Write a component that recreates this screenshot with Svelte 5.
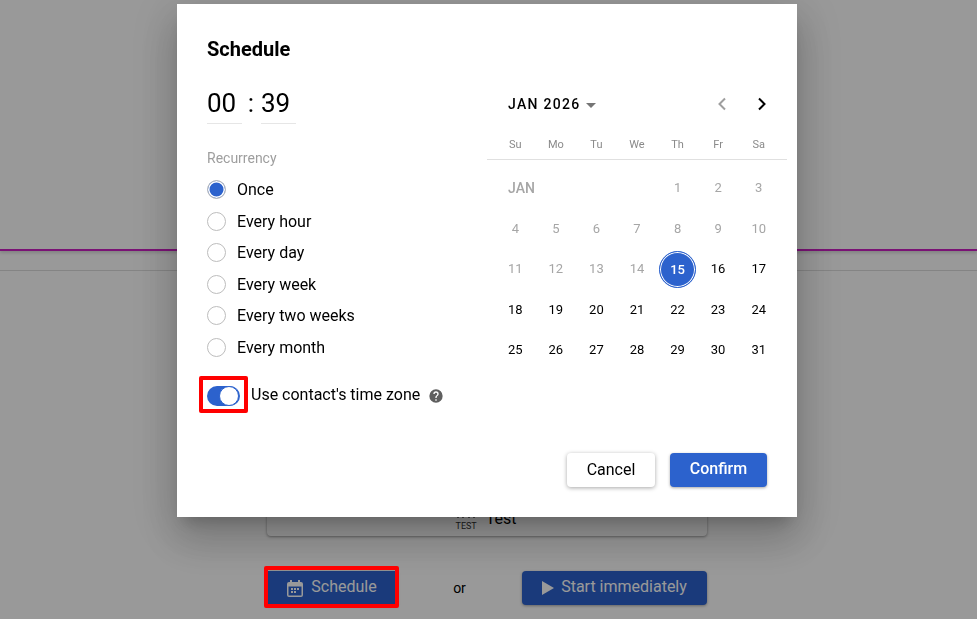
<script>
  const options = ["Once", "Every hour", "Every day", "Every week", "Every two weeks", "Every month"];
  const weekdays = ["Su", "Mo", "Tu", "We", "Th", "Fr", "Sa"];
  // 35 cells; first four hold the month label
  const days = Array.from({ length: 31 }, (_, i) => i + 1);
  let recurrence = $state("Once");
  let useContactZone = $state(true);
</script>

<div class="page">
  <div class="top"></div>
  <div class="sub"></div>
  <div class="content">
    <div class="card">
      <div class="test-icon">
        <svg width="18" height="6" viewBox="0 0 18 6"><path d="M1 0v3M6 0v3M12 0v3M17 0v3" fill="none" stroke="#444" stroke-width="1.5" /></svg>
        <span>TEST</span>
      </div>
      <span class="test-name">Test</span>
    </div>
    <div class="actions">
      <div class="marked">
        <button class="primary page-btn">
          <svg width="16" height="17" viewBox="0 0 16 17"><path fill="currentColor" fill-rule="evenodd" d="M3 0h2v2h6V0h2v2h1a2 2 0 0 1 2 2v11a2 2 0 0 1-2 2H2a2 2 0 0 1-2-2V4a2 2 0 0 1 2-2h1zM1.5 6.5V15a.5.5 0 0 0 .5.5h12a.5.5 0 0 0 .5-.5V6.5z" /><path fill="currentColor" d="M4 8h2v2H4zM7 8h2v2H7zM10 8h2v2h-2zM4 11h2v2H4zM7 11h2v2H7z" /></svg>
          Schedule
        </button>
      </div>
      <span class="or">or</span>
      <button class="primary page-btn start">
        <svg width="12" height="14" viewBox="0 0 12 14"><path d="M0 0l12 7-12 7z" fill="currentColor" /></svg>
        Start immediately
      </button>
    </div>
  </div>
</div>

<div class="overlay">
  <div class="modal">
    <h2>Schedule</h2>
    <div class="columns">
      <div class="left">
        <div class="time">
          <span class="digits">00</span>
          <span class="colon">:</span>
          <span class="digits">39</span>
        </div>
        <div class="group-label">Recurrency</div>
        <div class="radios">
          {#each options as o}
            <label class="radio">
              <input type="radio" name="recurrence" value={o} bind:group={recurrence} />
              <span class="dot"></span>
              {o}
            </label>
          {/each}
        </div>
        <div class="zone">
          <label class="marked-switch">
            <input type="checkbox" bind:checked={useContactZone} />
            <span class="track"><span class="knob"></span></span>
          </label>
          <span class="zone-text">Use contact's time zone</span>
          <svg class="help" width="16" height="16" viewBox="0 0 24 24"><path fill="#5f5f5f" d="M12 2a10 10 0 1 0 0 20 10 10 0 0 0 0-20zm1 17h-2v-2h2v2zm2.07-7.75-.9.92C13.45 12.9 13 13.5 13 15h-2v-.5c0-1.1.45-2.1 1.17-2.83l1.24-1.26A2 2 0 0 0 14 9a2 2 0 0 0-4 0H8a4 4 0 0 1 8 0c0 .88-.36 1.68-.93 2.25z" /></svg>
        </div>
      </div>
      <div class="calendar">
        <div class="cal-head">
          <div class="month">JAN 2026<span class="caret"></span></div>
          <div class="nav">
            <svg width="12" height="14" viewBox="0 0 12 14" fill="none" stroke="#9e9e9e" stroke-width="2"><path d="M9 1.5 3.5 7 9 12.5" /></svg>
            <svg width="12" height="14" viewBox="0 0 12 14" fill="none" stroke="#000" stroke-width="2"><path d="M3 1.5 8.5 7 3 12.5" /></svg>
          </div>
        </div>
        <div class="weekdays">
          {#each weekdays as d}<span>{d}</span>{/each}
        </div>
        <div class="grid">
          <span class="month-label">JAN</span>
          {#each days as d}
            <span class="day" class:past={d < 15} class:selected={d === 15}>{d}</span>
          {/each}
        </div>
      </div>
    </div>
    <div class="footer">
      <button class="cancel">Cancel</button>
      <button class="primary confirm">Confirm</button>
    </div>
  </div>
</div>

<style>
  :global(body) {
    margin: 0;
    font-family: Roboto, "Liberation Sans", sans-serif;
    color: #000;
    background: #fff;
    overflow: hidden;
  }
  button {
    font: inherit;
    border: 0;
    cursor: pointer;
  }
  .page {
    height: 619px;
    overflow: hidden;
  }
  .top {
    height: 249px;
    border-bottom: 2px solid #cc1fc4;
    box-shadow: 0 2px 3px rgba(0, 0, 0, 0.15);
  }
  .sub {
    height: 19px;
    border-bottom: 1px solid #ddd;
  }
  .content {
    width: 440px;
    margin-left: 267px;
    padding-top: 233px;
  }
  .card {
    height: 33px;
    margin-top: -1px;
    border-radius: 4px;
    box-shadow: 0 1px 3px rgba(0, 0, 0, 0.4);
    display: flex;
    justify-content: center;
    align-items: flex-end;
    gap: 9px;
    padding: 0 2px 5px 0;
    box-sizing: border-box;
    background: #fff;
  }
  .test-icon {
    display: flex;
    flex-direction: column;
    align-items: center;
    font-size: 9px;
    line-height: 10px;
    color: #333;
  }
  .test-name {
    font-size: 16px;
    line-height: 20px;
    margin-bottom: 2px;
  }
  .actions {
    margin-top: 35px;
    display: flex;
    align-items: center;
    justify-content: space-between;
  }
  .primary {
    background: #2c62cd;
    color: #fff;
    border-radius: 4px;
    box-shadow: 0 1px 3px rgba(0, 0, 0, 0.35);
  }
  .page-btn {
    height: 34px;
    font-size: 16px;
    display: flex;
    align-items: center;
    justify-content: center;
    gap: 8px;
    padding: 0 0 4px;
  }
  .page-btn svg {
    margin-top: 4px;
  }
  .marked {
    position: relative;
  }
  .marked .page-btn {
    width: 130px;
    border-radius: 0;
  }
  .marked::after {
    content: "";
    position: absolute;
    left: -3px;
    top: -5px;
    width: 127px;
    height: 34px;
    border: 4px solid #f00;
    border-radius: 2px;
    z-index: 20;
  }
  .or {
    font-size: 14px;
  }
  .start {
    width: 185px;
    gap: 7px;
  }
  .overlay {
    position: fixed;
    inset: 0;
    background: rgba(0, 0, 0, 0.4);
    z-index: 10;
    display: flex;
    justify-content: flex-start;
    align-items: flex-start;
    padding: 4px 0 0 177px;
  }
  .modal {
    width: 620px;
    height: 513px;
    box-sizing: border-box;
    padding: 32px 30px 30px;
    background: #fff;
    box-shadow: 0 11px 15px -7px rgba(0, 0, 0, 0.2), 0 24px 38px 3px rgba(0, 0, 0, 0.14), 0 9px 46px 8px rgba(0, 0, 0, 0.12);
    display: flex;
    flex-direction: column;
  }
  h2 {
    margin: 0;
    font-size: 20px;
    line-height: 26px;
    font-weight: 700;
  }
  .columns {
    display: flex;
    justify-content: space-between;
    margin-right: -20px;
    margin-top: 21px;
  }
  .left {
    width: 270px;
  }
  .time {
    display: flex;
    align-items: flex-start;
    height: 40px;
    margin-top: 2px;
    font-size: 26px;
  }
  .digits {
    width: 35px;
    height: 39px;
    line-height: 36px;
    box-sizing: border-box;
    border-bottom: 1px solid #e6e6e6;
  }
  .colon {
    width: 19px;
    text-align: right;
    padding-right: 7px;
    box-sizing: border-box;
    line-height: 36px;
  }
  .group-label {
    margin-top: 23px;
    font-size: 14px;
    line-height: 20px;
    color: #9e9e9e;
  }
  .radios {
    margin-top: 6px;
  }
  .radio {
    display: flex;
    align-items: center;
    gap: 11px;
    height: 31.5px;
    font-size: 16px;
  }
  input {
    position: absolute;
    opacity: 0;
    width: 0;
    height: 0;
  }
  .dot {
    width: 19px;
    height: 19px;
    box-sizing: border-box;
    border: 1px solid #bdbdbd;
    border-radius: 50%;
    background: #fff;
  }
  input:checked + .dot {
    background: #2c62cd;
    box-shadow: inset 0 0 0 1.5px #fff;
  }
  .zone {
    display: flex;
    align-items: center;
    margin-top: 12.6px;
    margin-left: -8px;
    font-size: 16px;
  }
  .marked-switch {
    display: block;
    box-sizing: border-box;
    width: 49px;
    height: 37px;
    border: 4px solid #f00;
    border-radius: 2px;
    padding: 6px 4px;
  }
  .track {
    display: block;
    position: relative;
    width: 33px;
    height: 20px;
    border-radius: 10px;
    background: #2c62cd;
  }
  .knob {
    position: absolute;
    right: 1px;
    top: 0;
    width: 20px;
    height: 20px;
    box-sizing: border-box;
    border: 1px solid #2c62cd;
    border-radius: 50%;
    background: #fff;
  }
  .zone-text {
    margin-left: 3px;
    margin-top: 1px;
  }
  .help {
    margin-left: 8px;
    margin-top: 3px;
  }
  .calendar {
    width: 300px;
    margin-top: 1px;
  }
  .cal-head {
    display: flex;
    justify-content: space-between;
    align-items: center;
    height: 40px;
    padding: 0 19px 0 21px;
  }
  .month {
    font-size: 14px;
    font-weight: 500;
    letter-spacing: 1.3px;
    display: flex;
    align-items: center;
  }
  .caret {
    margin-left: 5px;
    margin-top: 2px;
    border: 5px solid transparent;
    border-top-color: #757575;
    border-bottom: 0;
  }
  .nav {
    display: flex;
    gap: 28px;
  }
  .weekdays {
    display: grid;
    grid-template-columns: repeat(7, 1fr);
    padding: 0 8px;
    height: 30px;
    margin-top: 6px;
    box-sizing: border-box;
    align-items: center;
    border-bottom: 1px solid #e0e0e0;
    text-align: center;
    font-size: 11px;
    color: #8a8a8a;
  }
  .grid {
    display: grid;
    grid-template-columns: repeat(7, 1fr);
    grid-auto-rows: 40.5px;
    padding: 8px 8px 0;
    align-items: center;
    justify-items: center;
    font-size: 13px;
  }
  .month-label {
    grid-column: 1 / span 4;
    justify-self: start;
    margin-left: 13px;
    margin-top: -1px;
    font-size: 14px;
    font-weight: 500;
    color: #a6a6a6;
  }
  .day {
    width: 36px;
    height: 36px;
    line-height: 36px;
    text-align: center;
    border-radius: 50%;
  }
  .past {
    color: #a6a6a6;
  }
  .selected {
    box-sizing: border-box;
    width: 37px;
    height: 37px;
    background: #2c62cd;
    color: #fff;
    font-weight: 500;
    border: 1px solid #2c62cd;
    box-shadow: inset 0 0 0 1px #fff;
    line-height: 35px;
  }
  .footer {
    margin-top: auto;
    display: flex;
    justify-content: flex-end;
    gap: 15px;
  }
  .footer button {
    height: 34px;
    font-size: 16px;
    border-radius: 4px;
    padding: 0 0 2px;
  }
  .cancel {
    width: 88px;
    background: #fff;
    box-shadow: 0 1px 4px rgba(0, 0, 0, 0.35);
  }
  .footer .confirm {
    width: 97px;
    font-weight: 500;
    padding-bottom: 4px;
  }
</style>
